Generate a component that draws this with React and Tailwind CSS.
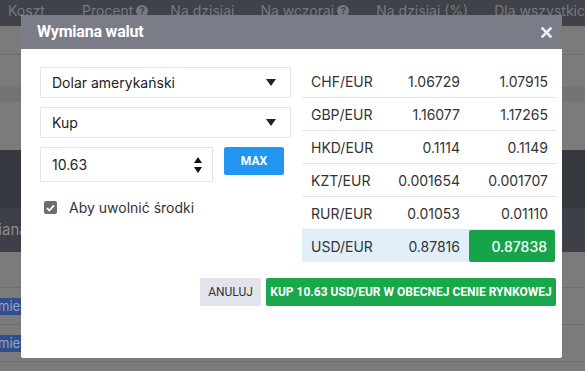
import React from "react";

const rows = [
  ["CHF/EUR", "1.06729", "1.07915"],
  ["GBP/EUR", "1.16077", "1.17265"],
  ["HKD/EUR", "0.1114", "0.1149"],
  ["KZT/EUR", "0.001654", "0.001707"],
  ["RUR/EUR", "0.01053", "0.01110"],
];

function Caret() {
  return (
    <svg width="10" height="7" viewBox="0 0 10 7" className="shrink-0">
      <path d="M0 0 H10 L5 7 Z" fill="#222" />
    </svg>
  );
}

function Q() {
  return (
    <span className="inline-flex w-[12px] h-[12px] rounded-full bg-[#767982] text-[#3f4249] text-[9px] font-bold items-center justify-center">?</span>
  );
}

export default function App() {
  return (
    <div
      className="relative w-[585px] h-[371px] overflow-hidden bg-[#7b7b7b]"
      style={{ fontFamily: "Inter, 'Noto Sans', sans-serif" }}
    >
      {/* background page (dimmed) */}
      <div className="flex flex-col">
        <div className="h-[26px] bg-[#3f4249] flex items-start pt-[4px] text-[14px] text-[#767982] leading-[14px] whitespace-nowrap">
          <span className="ml-[8px] shrink-0">Koszt</span>
          <span className="ml-[37px] shrink-0 flex items-center gap-[3px]">Procent <Q /></span>
          <span className="ml-[22px] shrink-0">Na dzisiaj</span>
          <span className="ml-[26px] shrink-0 flex items-center gap-[3px]">Na wczoraj <Q /></span>
          <span className="ml-[27px] shrink-0">Na dzisiaj (%)</span>
          <span className="ml-[26px] shrink-0">Dla wszystkich</span>
        </div>
        <div className="h-[29px] border-b border-[#6d6d6d]" />
        <div className="h-[32px]" />
        <div className="h-[15px] bg-[#737373]" />
        <div className="h-[48px]" />
        <div className="h-[58px] bg-[#35383f]" />
        <div className="h-[44px] bg-[#3d4048] flex items-center text-[15px] text-[#8a8c93] -ml-[38px]">Wymiana</div>
        <div className="h-[36px] border-b border-[#6d6d6d]" />
        <div className="h-[37px] border-b border-[#6d6d6d] flex items-center">
          <span className="bg-[#2d4f8e] text-[#9aa5bd] text-[13px] h-[17px] leading-[17px] pl-0 pr-[3px] -ml-[2px]">mier</span>
        </div>
        <div className="h-[37px] border-b border-[#6d6d6d] flex items-center">
          <span className="bg-[#2d4f8e] text-[#9aa5bd] text-[13px] h-[17px] leading-[17px] pl-0 pr-[3px] -ml-[2px]">mier</span>
        </div>
      </div>

      {/* modal */}
      <div className="absolute left-[21px] top-[15px] w-[541px] h-[343px] bg-white rounded-[2px] overflow-hidden flex flex-col">
        <div className="h-[34px] bg-[#7a7c88] flex items-center justify-between pl-[16px] pr-[10px]">
          <span className="text-white text-[16px] font-bold tracking-[-0.2px]" style={{ fontFamily: "Roboto, sans-serif" }}>Wymiana walut</span>
          <svg width="11" height="11" viewBox="0 0 11 11">
            <path d="M1.5 1.5 L9.5 9.5 M9.5 1.5 L1.5 9.5" stroke="#eceef2" strokeWidth="2.6" strokeLinecap="square" />
          </svg>
        </div>
        <div className="flex flex-col pl-[19px] pr-[6px] pt-[16px]">
          <div className="flex gap-[11px]">
            {/* left column */}
            <div className="w-[252px] flex flex-col pt-[2px]">
              <div className="h-[31px] border border-[#e6e6e6] flex items-center justify-between pl-[11px] pr-[14px] text-[14px] text-[#222]">
                <span>Dolar amerykański</span>
                <Caret />
              </div>
              <div className="h-[31px] mt-[9px] border border-[#e6e6e6] flex items-center justify-between pl-[11px] pr-[14px] text-[14px] text-[#222]">
                <span>Kup</span>
                <Caret />
              </div>
              <div className="flex mt-[9px] gap-[11px] items-start">
                <div className="w-[173px] h-[35px] border border-[#e6e6e6] flex items-center justify-between pl-[11px] pr-[10px] text-[14px] text-[#222]">
                  <span>10.63</span>
                  <svg width="8" height="16" viewBox="0 0 8 16">
                    <path d="M0 6 L4 0 L8 6 Z M0 10 L8 10 L4 16 Z" fill="#111" />
                  </svg>
                </div>
                <div className="w-[60px] h-[28px] bg-[#2196f3] rounded-[2px] flex items-center justify-center text-white text-[12px] font-bold" style={{ fontFamily: "Roboto, sans-serif" }}>
                  MAX
                </div>
              </div>
              <div className="flex items-center mt-[15px] pl-[4px]">
                <div className="w-[13px] h-[13px] rounded-[2px] bg-[#6e6e6e] flex items-center justify-center">
                  <svg width="9" height="8" viewBox="0 0 9 8">
                    <path d="M1 4.2 L3.4 6.5 L8 1.3" stroke="white" strokeWidth="1.8" fill="none" />
                  </svg>
                </div>
                <span className="ml-[12px] text-[14px] text-[#333]">Aby uwolnić środki</span>
              </div>
            </div>
            {/* right table */}
            <div className="w-[254px] flex flex-col text-[14px] text-[#333]">
              {rows.map((r) => (
                <div key={r[0]} className="h-[33px] flex items-center border-b border-[#e2e2e2]">
                  <span className="w-[88px] pl-[9px]">{r[0]}</span>
                  <span className="w-[79px] text-right pr-[9px]">{r[1]}</span>
                  <span className="w-[87px] text-right pr-[8px]">{r[2]}</span>
                </div>
              ))}
              <div className="h-[32px] flex items-center">
                <div className="h-full w-[167px] bg-[#e1effb] flex items-center">
                  <span className="w-[88px] pl-[9px]">USD/EUR</span>
                  <span className="w-[79px] text-right pr-[9px]">0.87816</span>
                </div>
                <div className="h-full w-[86px] bg-[#17a34a] rounded-[2px] flex items-center justify-end pr-[8px] text-white font-medium">
                  0.87838
                </div>
              </div>
            </div>
          </div>
          <div className="flex justify-end gap-[5px] mt-[16px]" style={{ fontFamily: "Roboto, sans-serif" }}>
            <div className="w-[61px] h-[28px] bg-[#e2e4ec] rounded-[2px] flex items-center justify-center text-[12px] text-[#333]">
              ANULUJ
            </div>
            <div className="w-[290px] h-[28px] bg-[#18a74a] rounded-[2px] flex items-center justify-center text-[12px] text-white font-bold whitespace-nowrap">
              KUP 10.63 USD/EUR W OBECNEJ CENIE RYNKOWEJ
            </div>
          </div>
        </div>
      </div>
    </div>
  );
}
